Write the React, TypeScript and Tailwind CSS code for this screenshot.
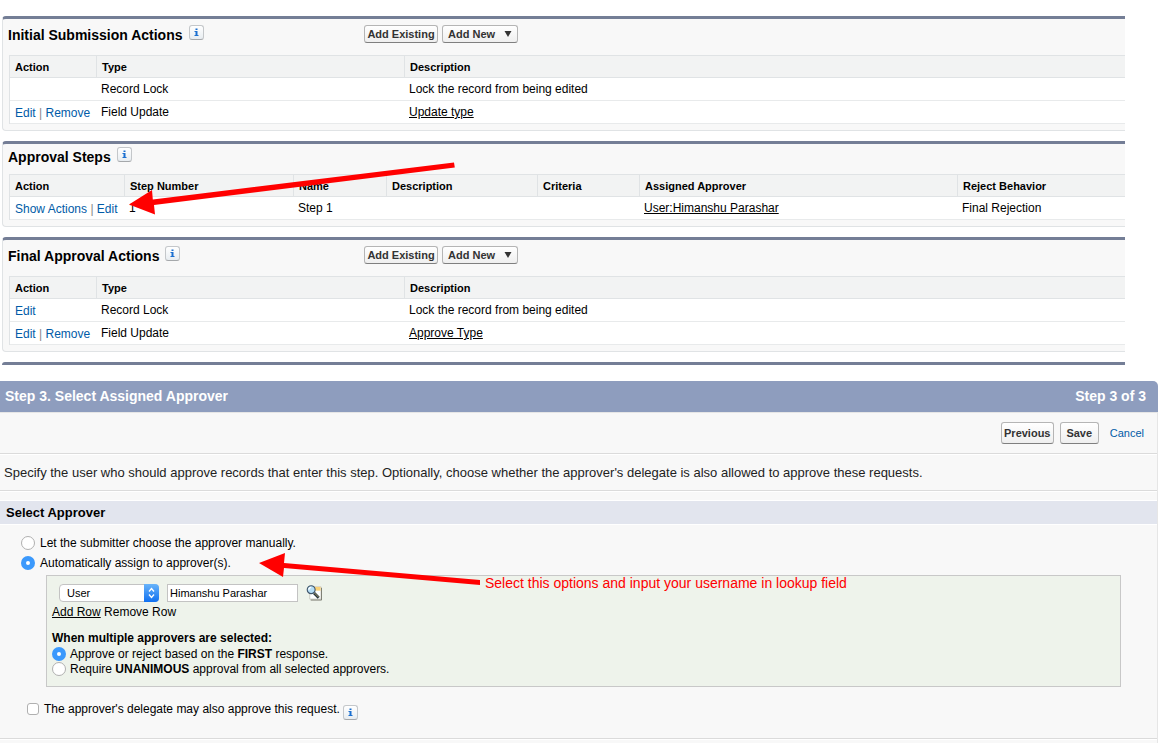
import type { ReactNode } from "react";

type Row = { actions: string[]; cells: { text: string; link?: boolean }[] };

type RelatedListProps = {
    title: string;
    columns: { label: string; width?: string }[];
    rows: Row[];
    withButtons?: boolean;
    children?: ReactNode;
};

const actionColumns = [
    { label: "Action", width: "w-[87px]" },
    { label: "Type", width: "w-[308px]" },
    { label: "Description" },
];

const stepColumns = [
    { label: "Action", width: "w-[115px]" },
    { label: "Step Number", width: "w-[169px]" },
    { label: "Name", width: "w-[93px]" },
    { label: "Description", width: "w-[151px]" },
    { label: "Criteria", width: "w-[102px]" },
    { label: "Assigned Approver", width: "w-[318px]" },
    { label: "Reject Behavior" },
];

const initialRows: Row[] = [
    { actions: [], cells: [{ text: "Record Lock" }, { text: "Lock the record from being edited" }] },
    { actions: ["Edit", "Remove"], cells: [{ text: "Field Update" }, { text: "Update type", link: true }] },
];

const stepRows: Row[] = [
    {
        actions: ["Show Actions", "Edit"],
        cells: [
            { text: "1" },
            { text: "Step 1" },
            { text: "" },
            { text: "" },
            { text: "User:Himanshu Parashar", link: true },
            { text: "Final Rejection" },
        ],
    },
];

const finalRows: Row[] = [
    { actions: ["Edit"], cells: [{ text: "Record Lock" }, { text: "Lock the record from being edited" }] },
    { actions: ["Edit", "Remove"], cells: [{ text: "Field Update" }, { text: "Approve Type", link: true }] },
];

const buttonStyle =
    "rounded-[3px] border border-[#b5b5b5] border-b-[#7f7f7f] bg-linear-to-b from-white to-[#efefef] text-[11px] font-bold text-[#333] whitespace-nowrap";

const radioStyle =
    "size-[14px] shrink-0 appearance-none rounded-full border border-[#b0b0b0] bg-white checked:border-[5px] checked:border-[#3b99fc]";

function InfoButton() {
    return (
        <button
            type="button"
            aria-label="Info"
            className="flex size-[15px] shrink-0 items-center justify-center rounded-[3px] border border-[#c4c7ca] border-b-[#a5a8ab] bg-linear-to-b from-white to-[#e8edf1]"
        >
            <svg viewBox="0 0 15 15" className="size-[15px] shrink-0" fill="#1b6fd0">
                <path d="M6.500 3.500h2v1.500h-2zM5.500 6h3v4h1v1h-4v-1h1V7h-1z" />
            </svg>
        </button>
    );
}

function RelatedList({ title, columns, rows, withButtons, children }: RelatedListProps) {
    return (
        <section className="relative mb-[10px] rounded-bl-[4px] rounded-tl-[4px] border-b border-l border-t-[3px] border-[#e0e3e5] border-t-[#747e96] bg-[#f8f8f8] pb-[6px] pl-[5px]">
            <div className={withButtons ? "flex h-9 items-start pt-[6px]" : "flex h-[30px] items-start pt-[3px]"}>
                <div className={withButtons ? "flex w-[356px] items-start gap-[6px]" : "flex items-start gap-[6px]"}>
                    <h2 className="text-sm leading-5 font-bold">{title}</h2>
                    <InfoButton />
                </div>
                {withButtons && (
                    <div className="flex gap-1">
                        <button type="button" className={`${buttonStyle} h-[18px] w-[74px]`}>
                            Add Existing
                        </button>
                        <button type="button" className={`${buttonStyle} flex h-[18px] w-[76px] items-center justify-between px-[5px]`}>
                            Add New
                            <svg viewBox="0 0 8 6" className="h-[6px] w-2" fill="#333">
                                <path d="M0.500 0h7L4 6z" />
                            </svg>
                        </button>
                    </div>
                )}
            </div>
            <div className="pl-px">
                <table className="w-full table-fixed border-separate border-spacing-0 border-l border-t border-[#e0e3e5] bg-white text-left">
                    <thead>
                        <tr className="h-[22px] bg-[#f2f3f3]">
                            {columns.map((col, i) => (
                                <th
                                    key={i}
                                    className={`${col.width ?? ""} border-b border-[#e0e3e5] pl-[5px] text-[11px] leading-4 font-bold ${i < columns.length - 1 ? "border-r" : ""}`}
                                >
                                    {col.label}
                                </th>
                            ))}
                        </tr>
                    </thead>
                    <tbody>
                        {rows.map((row, i) => (
                            <tr key={i} className="h-[23px]">
                                <td className="border-b border-[#e8eaeb] pt-[2px] pl-[5px] leading-4 whitespace-nowrap text-[#888]">
                                    {row.actions.map((action, j) => (
                                        <span key={action}>
                                            {j > 0 && " | "}
                                            <a href="#" className="text-[#015ba7]">{action}</a>
                                        </span>
                                    ))}
                                </td>
                                {row.cells.map((cell, j) => (
                                    <td key={j} className="border-b border-[#e8eaeb] pl-1 leading-4">
                                        {cell.link ? <a href="#" className="underline">{cell.text}</a> : cell.text}
                                    </td>
                                ))}
                            </tr>
                        ))}
                    </tbody>
                </table>
            </div>
            {children}
        </section>
    );
}

function LookupIcon() {
    return (
        <svg viewBox="0 0 17 17" className="size-4">
            <path d="M4 2h12v13H4z" fill="#fff" stroke="#c9c9c0" />
            <path d="M8 2h7.500v4H8z" fill="#f9d27a" />
            <path d="M5 16h11.500V3" fill="none" stroke="#77776d" />
            <path d="M8.500 8.500l5 5" stroke="#26323d" strokeWidth="3" />
            <path d="M9 8.500l4.500 4.500" stroke="#b4a56c" strokeWidth="1" />
            <circle cx="5.500" cy="5" r="4.200" fill="#b6def6" stroke="#41566b" strokeWidth="1.200" />
            <path d="M3 5C3 3.500 4 2.500 5.500 2.500" fill="none" stroke="#fff" strokeWidth="1.300" />
        </svg>
    );
}

export default function App() {
    return (
        <main className="min-h-screen overflow-x-hidden bg-white font-['Liberation_Sans',Arial,sans-serif] text-xs text-black">
            <div className="mr-12 ml-[2px] pt-4">
                <RelatedList title="Initial Submission Actions" columns={actionColumns} rows={initialRows} withButtons />
                <RelatedList title="Approval Steps" columns={stepColumns} rows={stepRows}>
                    <svg viewBox="0 0 326 54" className="pointer-events-none absolute top-[17px] left-[126px] h-[54px] w-[326px]" fill="red">
                        <path d="M0 43.500L23 29l0.800 9.500L325 1.500l0.800 5L25 44l1 9.500z" />
                    </svg>
                </RelatedList>
                <RelatedList title="Final Approval Actions" columns={actionColumns} rows={finalRows} withButtons />
                <div className="h-[3px] rounded-tl-[3px] bg-[#747e96]" />
            </div>

            <section className="mt-4 mr-[15px]">
                <header className="flex h-[31px] items-center justify-between rounded-tr-[5px] bg-[#8e9dbe] pr-3 pb-[2px] pl-[5px] text-sm font-bold text-white">
                    <h1>Step 3. Select Assigned Approver</h1>
                    <span>Step 3 of 3</span>
                </header>
                <form className="border-t border-r border-[#e6e6e6] bg-[#f8f8f8]">
                    <div className="flex h-[41px] items-center justify-end gap-[6px] border-b border-[#dbdbdb] pr-[13px] text-[11px]">
                        <button type="button" className={`${buttonStyle} h-[22px] w-[53px]`}>Previous</button>
                        <button type="button" className={`${buttonStyle} h-[22px] w-[39px]`}>Save</button>
                        <a href="#" className="ml-[5px] text-[#015ba7]">Cancel</a>
                    </div>
                    <p className="border-t border-b border-t-white border-b-[#dbdbdb] px-1 py-[9px] text-[13px] leading-[17px] text-[#222]">
                        Specify the user who should approve records that enter this step. Optionally, choose whether the approver's delegate is also allowed to approve these requests.
                    </p>
                    <div className="h-[9px] border-t border-white" />
                    <h3 className="border-t border-b border-white bg-[#e2e5ee] pl-[6px] text-[13px] leading-[23px] font-bold">
                        Select Approver
                    </h3>

                    <div className="relative pt-2 pr-9 pl-[21px]">
                        <label className="flex h-5 items-center gap-[5px]">
                            <input type="radio" name="assignment" className={radioStyle} />
                            Let the submitter choose the approver manually.
                        </label>
                        <label className="flex h-5 items-center gap-[5px]">
                            <input type="radio" name="assignment" defaultChecked className={radioStyle} />
                            Automatically assign to approver(s).
                        </label>

                        <div className="mt-[2px] ml-[25px] border border-[#c8c8c8] bg-[#eef3eb] px-[5px] pt-2 pb-[10px]">
                            <div className="flex h-[18px] items-center gap-2 pl-[7px]">
                                <div className="relative">
                                    <select
                                        aria-label="Approver type"
                                        className="block h-[18px] w-[100px] appearance-none rounded-[4px] border border-[#c3c3c3] bg-white pl-[7px] text-[11px] leading-4"
                                    >
                                        <option>User</option>
                                        <option>Queue</option>
                                    </select>
                                    <svg viewBox="0 0 15 18" className="pointer-events-none absolute top-0 right-0 h-[18px] w-[15px]">
                                        <defs>
                                            <linearGradient id="stepper" x2="0" y2="1">
                                                <stop stopColor="#68b4fa" />
                                                <stop offset="1" stopColor="#1070f0" />
                                            </linearGradient>
                                        </defs>
                                        <path d="M0 0h11a4 4 0 0 1 4 4v10a4 4 0 0 1-4 4H0z" fill="url(#stepper)" />
                                        <path d="M5 7.500l2.500-3 2.500 3M5 10.500l2.500 3 2.500-3" fill="none" stroke="#fff" strokeWidth="1.300" />
                                    </svg>
                                </div>
                                <input
                                    type="text"
                                    aria-label="Approver"
                                    defaultValue="Himanshu Parashar"
                                    className="h-[18px] w-[131px] border border-[#c3c3c3] bg-white px-[2px] text-[11px]"
                                />
                                <button type="button" aria-label="Lookup">
                                    <LookupIcon />
                                </button>
                            </div>
                            <div className="mt-[2px] leading-4">
                                <a href="#" className="underline">Add Row</a> <a href="#">Remove Row</a>
                            </div>
                            <fieldset className="mt-[10px]">
                                <legend className="leading-4 font-bold">When multiple approvers are selected:</legend>
                                <label className="flex h-[15px] items-center gap-1">
                                    <input type="radio" name="response" defaultChecked className={radioStyle} />
                                    <span>Approve or reject based on the <b>FIRST</b> response.</span>
                                </label>
                                <label className="flex h-[15px] items-center gap-1">
                                    <input type="radio" name="response" className={radioStyle} />
                                    <span>Require <b>UNANIMOUS</b> approval from all selected approvers.</span>
                                </label>
                            </fieldset>
                        </div>

                        {/* callout for the lookup field */}
                        <svg viewBox="0 0 222 34" className="pointer-events-none absolute top-[28px] left-[259px] h-[34px] w-[222px]" fill="red">
                            <path d="M0 10L26 0l-1 10L221 27v5L25 15l-1 9z" />
                        </svg>
                        <p className="absolute top-[48px] left-[485px] text-sm leading-5 text-[#f00]">
                            Select this options and input your username in lookup field
                        </p>
                    </div>

                    <div className="flex items-start gap-[3px] border-b border-[#dbdbdb] pt-[14px] pb-[18px] pl-[27px]">
                        <label className="flex h-4 items-center gap-[5px]">
                            <input type="checkbox" className="size-3 appearance-none rounded-[3px] border border-[#b0b0b0] bg-white checked:bg-[#3b99fc]" />
                            The approver's delegate may also approve this request.
                        </label>
                        <div className="pt-1">
                            <InfoButton />
                        </div>
                    </div>
                    <div className="h-[5px] border-t border-white" />
                </form>
            </section>
        </main>
    );
}
